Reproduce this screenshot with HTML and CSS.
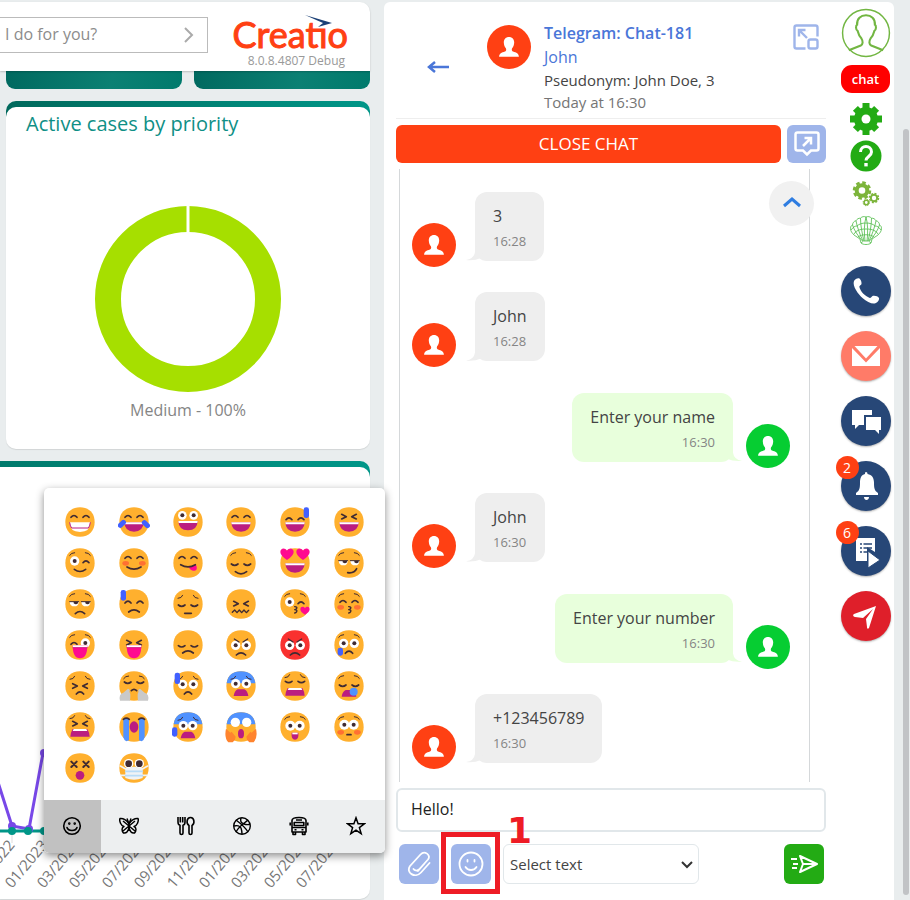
FILE: index.html
```html
<!DOCTYPE html>
<html lang="en">
<head>
    <meta charset="UTF-8">
    <meta name="viewport" content="width=device-width, initial-scale=1.0">
    <title>Creatio - Telegram: Chat-181</title>
    <link rel="stylesheet" href="styles.css">
</head>
<body>
    <!-- Shared shapes -->
    <svg class="sprite" aria-hidden="true">
        <symbol id="person" viewBox="0 0 44 44">
            <path fill="#fff" d="M22 12c-3.200 0-5.300 2.200-5.200 5.600.1 2.600.9 4.500 2.200 5.900.4 1.400.2 2.500-1 3-3.500 1.200-5.800 2-5.900 5.300h19.800c-.1-3.300-2.400-4.100-5.900-5.300-1.200-.5-1.400-1.600-1-3 1.300-1.400 2.100-3.300 2.200-5.900.1-3.400-2-5.600-5.200-5.600z"/>
        </symbol>
    </svg>

    <div class="app">
        <main class="dashboard">
            <header class="topbar">
                <div class="command">
                    <input type="text" class="command-input" placeholder="I do for you?" aria-label="What can I do for you?">
                    <button class="command-go" aria-label="Run command">
                        <svg width="12" height="18" viewBox="0 0 12 18" fill="none" stroke="#aaa" stroke-width="2"><path d="M2 2l7 7-7 7"/></svg>
                    </button>
                </div>
                <div class="brand">
                    <div class="brand-name">Creatio
                        <svg class="brand-swoosh" width="28" height="13" viewBox="0 0 28 13"><path fill="#fff" d="M12 5h10v8h-10z"/><path fill="#1b4077" d="M0 0l27 8-14 4 5-4z"/></svg>
                    </div>
                    <div class="brand-version">8.0.8.4807 Debug</div>
                </div>
            </header>

            <div class="tiles">
                <div class="tile"></div>
                <div class="tile"></div>
            </div>

            <section class="card">
                <div class="card-body">
                    <h2 class="card-title">Active cases by priority</h2>
                    <svg class="donut" width="190" height="190" viewBox="0 0 190 190">
                        <circle cx="95" cy="95" r="80" fill="none" stroke="#a6df00" stroke-width="26"/>
                        <path d="M95 0v30" stroke="#fff" stroke-width="3"/>
                    </svg>
                    <div class="donut-label">Medium - 100%</div>
                </div>
            </section>

            <section class="card card-wide">
                <div class="card-body">
                    <svg class="line-chart" width="370" height="160" viewBox="0 0 370 160">
                        <path d="M12 92v12M44 92v12" stroke="#ddd"/>
                        <path d="M-4 37L12 87l17 3L43 14" fill="none" stroke="#7848e8" stroke-width="3"/>
                        <path d="M0 92h60" stroke="#009688" stroke-width="3"/>
                        <g fill="#7848e8"><circle cx="12" cy="87" r="4"/><circle cx="29" cy="90" r="4"/><circle cx="44" cy="14" r="4"/></g>
                        <g fill="#009688"><circle cx="12" cy="92" r="4"/><circle cx="28" cy="92" r="4"/><circle cx="44" cy="92" r="4"/></g>
                        <g class="axis-labels">
                            <text transform="translate(-21 150) rotate(-50)">11/2022</text>
                            <text transform="translate(12 150) rotate(-50)">01/2023</text>
                            <text transform="translate(44 150) rotate(-50)">03/2023</text>
                            <text transform="translate(76 150) rotate(-50)">05/2023</text>
                            <text transform="translate(109 150) rotate(-50)">07/2023</text>
                            <text transform="translate(141 150) rotate(-50)">09/2023</text>
                            <text transform="translate(174 150) rotate(-50)">11/2023</text>
                            <text transform="translate(206 150) rotate(-50)">01/2024</text>
                            <text transform="translate(238 150) rotate(-50)">03/2024</text>
                            <text transform="translate(271 150) rotate(-50)">05/2024</text>
                            <text transform="translate(303 150) rotate(-50)">07/2024</text>
                        </g>
                    </svg>
                </div>
            </section>

            <div class="emoji-picker">
                <div class="emoji-grid" id="emojiGrid"></div>
                <div class="emoji-tabs">
                    <button class="emoji-tab active" aria-label="Smileys">
                        <svg width="20" height="20" viewBox="0 0 20 20" fill="none" stroke="#000" stroke-width="1.600" stroke-linecap="round"><circle cx="10" cy="10" r="8.300"/><path d="M5 11.500c1.300 4 8.700 4 10 0"/><circle cx="7.300" cy="7.600" r=".5" fill="#000"/><circle cx="12.700" cy="7.600" r=".5" fill="#000"/></svg>
                    </button>
                    <button class="emoji-tab" aria-label="Nature">
                        <svg width="20" height="20" viewBox="0 0 20 20" fill="none" stroke="#000" stroke-width="1.500" stroke-linejoin="round"><path d="M10 8C8 4 4 2 1 2.500 0 5 2 10 5 10.500c-2.500 1-2.500 4-.5 6.500 3 .5 5-2 5.500-6 .5 4 2.500 6.500 5.500 6 2-2.500 2-5.500-.5-6.500 3-.5 5-5.500 4-8-3-.5-7 1.500-9 5.500z"/><path d="M4 5l12 10M16 5L4 15M10 6v8M8 2.500L10 8l2-5.500"/></svg>
                    </button>
                    <button class="emoji-tab" aria-label="Food">
                        <svg width="20" height="20" viewBox="0 0 20 20" fill="none" stroke="#000" stroke-width="1.600" stroke-linejoin="round"><path d="M2 1v5c0 2 1 3 2 3.300V17c0 2 3 2 3 0V9.300c1-.3 2-1.300 2-3.300V1M4.300 1v5.500M6.700 1v5.500"/><path d="M14.500 1.500c-4 0-4.500 6.500-1.500 8V17c0 2 3 2 3 0V9.500c3-1.500 2.500-8-1.500-8z"/></svg>
                    </button>
                    <button class="emoji-tab" aria-label="Activities">
                        <svg width="20" height="20" viewBox="0 0 20 20" fill="none" stroke="#000" stroke-width="1.400"><circle cx="10" cy="10" r="8.300"/><path d="M4 4c4 3 9 7 12 12M16 4c-3 3-9 6-12 12M9 2c-1 3 0 5 3 6 2 .7 4 1 6 0M2 10c3-1 6 0 7 2 1 3 1 4 1 6"/></svg>
                    </button>
                    <button class="emoji-tab" aria-label="Travel">
                        <svg width="20" height="20" viewBox="0 0 20 20" fill="none" stroke="#000" stroke-width="1.600" stroke-linejoin="round"><path d="M3 16V4.500C3 2.500 5 1.500 10 1.500s7 1 7 3V16zM3 11.500h14M4 16v2.500h2.500V16M13.500 16v2.500H16V16M1.200 6.500v3M18.800 6.500v3"/><path d="M5.200 6.500h9.600v3H5.200zM7 4h6M5.500 13.700h2M12.500 13.700h2"/></svg>
                    </button>
                    <button class="emoji-tab" aria-label="Favorites">
                        <svg width="20" height="20" viewBox="0 0 20 20" fill="none" stroke="#000" stroke-width="1.500"><path d="M10 1.800l2.100 5.900 6.300.1-5 3.800 1.800 6.100-5.200-3.600-5.200 3.600 1.800-6.100-5-3.800 6.300-.1z"/></svg>
                    </button>
                </div>
            </div>
        </main>

        <aside class="side">
            <section class="chat">
                <header class="chat-header">
                    <button class="back" aria-label="Back">
                        <svg width="24" height="14" viewBox="0 0 24 14"><path d="M3 7h20M9 2L3 7l6 5" fill="none" stroke="#4a76d8" stroke-width="2.500"/></svg>
                    </button>
                    <svg class="avatar avatar-client"><use href="#person"/></svg>
                    <div class="contact">
                        <a href="#" class="contact-channel">Telegram: Chat-181</a>
                        <a href="#" class="contact-name">John</a>
                        <div class="contact-alias">Pseudonym: John Doe, 3</div>
                        <div class="contact-time">Today at 16:30</div>
                    </div>
                    <button class="expand" aria-label="Open in window">
                        <svg width="26" height="26" viewBox="0 0 26 26" fill="none" stroke="#9fb5ea" stroke-width="2.400"><path d="M12.500 24.500H3.500c-1.500 0-2-.5-2-2v-19c0-1.500.5-2 2-2h19c1.500 0 2 .5 2 2v9"/><rect x="15.500" y="15.500" width="9" height="9" rx="2"/><path d="M6 12.500V6h6.500M6 6l8 8"/></svg>
                    </button>
                </header>

                <div class="chat-actions">
                    <button class="btn-close">CLOSE CHAT</button>
                    <button class="btn-tool" aria-label="Transfer chat">
                        <svg width="26" height="26" viewBox="0 0 26 26" fill="none" stroke="#fff" stroke-width="2.500"><path d="M3.500 1.500h19c1.300 0 2 .7 2 2v14c0 1.300-.7 2-2 2H17l-4 4-4-4H3.500c-1.300 0-2-.7-2-2v-14c0-1.300.7-2 2-2z"/><path d="M9 15l7.500-7.500M10.500 7H17v6.500"/></svg>
                    </button>
                </div>

                <div class="messages">
                    <button class="scroll-up" aria-label="Scroll up">
                        <svg width="20" height="12" viewBox="0 0 20 12" fill="none" stroke="#2f7de1" stroke-width="3"><path d="M2 9l8-7 8 7"/></svg>
                    </button>
                    <div class="message">
                        <svg class="avatar avatar-client"><use href="#person"/></svg>
                        <div class="bubble"><p>3</p><time>16:28</time></div>
                    </div>
                    <div class="message">
                        <svg class="avatar avatar-client"><use href="#person"/></svg>
                        <div class="bubble"><p>John</p><time>16:28</time></div>
                    </div>
                    <div class="message message-out">
                        <svg class="avatar avatar-agent"><use href="#person"/></svg>
                        <div class="bubble"><p>Enter your name</p><time>16:30</time></div>
                    </div>
                    <div class="message">
                        <svg class="avatar avatar-client"><use href="#person"/></svg>
                        <div class="bubble"><p>John</p><time>16:30</time></div>
                    </div>
                    <div class="message message-out">
                        <svg class="avatar avatar-agent"><use href="#person"/></svg>
                        <div class="bubble"><p>Enter your number</p><time>16:30</time></div>
                    </div>
                    <div class="message">
                        <svg class="avatar avatar-client"><use href="#person"/></svg>
                        <div class="bubble"><p>+123456789</p><time>16:30</time></div>
                    </div>
                </div>

                <input type="text" class="message-input" value="Hello!" aria-label="Message">

                <div class="composer">
                    <button class="btn-tool" aria-label="Attach file">
                        <svg width="26" height="28" viewBox="0 0 26 28" fill="none" stroke="#fff" stroke-width="1.800" stroke-linecap="round" stroke-linejoin="round"><path d="M23.500 13l-8.500 9.500C9 29-.500 22.500 4 16L14.500 4.500c4-4.500 11 .5 7.500 5L13 19.500c-2 2-4.500.8-5.500-.5M18.500 13.500L12 21"/></svg>
                    </button>
                    <div class="emoji-toggle">
                        <button class="btn-tool" aria-label="Insert emoji">
                            <svg width="26" height="26" viewBox="0 0 26 26" fill="none" stroke="#fff" stroke-width="1.800" stroke-linecap="round"><circle cx="13" cy="13" r="11.500"/><path d="M7.500 16c2.500 4 8.500 4 11 0M9.500 9v1.500M16.500 9v1.500"/></svg>
                        </button>
                        <span class="callout">1</span>
                    </div>
                    <div class="select-wrap">
                        <select class="template-select" aria-label="Text template">
                            <option>Select text</option>
                        </select>
                        <svg class="select-arrow" width="12" height="8" viewBox="0 0 12 8" fill="none" stroke="#333" stroke-width="2"><path d="M1 1l5 5 5-5"/></svg>
                    </div>
                    <button class="btn-send" aria-label="Send">
                        <svg width="28" height="20" viewBox="0 0 28 20" fill="none" stroke="#fff" stroke-width="2" stroke-linejoin="round"><path d="M10 2l17 8-17 8 3-8zM13 10h13M1 5h6M3 10h5M2 14h5"/></svg>
                    </button>
                </div>
            </section>

            <nav class="rail">
                <button class="rail-btn rail-user" aria-label="Profile">
                    <svg width="50" height="50" viewBox="0 0 48 48" fill="none" stroke="#72b642" stroke-width="1.400"><circle cx="24" cy="24" r="22.500"/><path stroke-width="2" d="M7.500 40.500L19 36c2-1 2.500-4 .5-7-2-2-3-5-3.500-7-2-1-2-5-.5-6C15 10 19 7 24 7s9 3 8.500 9c1.500 1 1.500 5-.5 6-.5 2-1.500 5-3.500 7-2 3-1.500 6 .5 7l11.500 4.500"/></svg>
                </button>
                <button class="rail-chat">chat</button>
                <button class="rail-btn rail-gear" aria-label="Settings">
                    <svg width="32" height="32" viewBox="0 0 32 32"><g fill="#23ab14"><circle cx="16" cy="16" r="12"/><path d="M12.500 0h7v32h-7z"/><path d="M0 12.500h32v7H0z"/><path d="M12.500 1h7v30h-7z" transform="rotate(45 16 16)"/><path d="M12.500 1h7v30h-7z" transform="rotate(-45 16 16)"/></g><circle cx="16" cy="16" r="4.500" fill="#fff"/></svg>
                </button>
                <button class="rail-btn rail-help" aria-label="Help">
                    <svg width="32" height="32" viewBox="0 0 32 32"><circle cx="16" cy="16" r="15.500" fill="#23ab14"/><path d="M10.500 12c0-7.500 11-7.500 11 0 0 4.500-5.500 4.500-5.500 8.500" fill="none" stroke="#fff" stroke-width="3"/><path fill="#fff" d="M14.300 23h3.400v3.400h-3.400z"/></svg>
                </button>
                <button class="rail-btn rail-gears" aria-label="System designer">
                    <svg width="28" height="26" viewBox="0 0 28 26" fill="none" stroke="#7cb43a"><circle cx="10" cy="9.500" r="5.300" stroke-width="4"/><circle cx="10" cy="9.500" r="8" stroke-width="2.500" stroke-dasharray="3.600 2.680"/><circle cx="22" cy="17" r="3.200" stroke-width="2"/><circle cx="22" cy="17" r="4.600" stroke-width="1.300" stroke-dasharray="2 1.610"/><circle cx="14.300" cy="21.500" r="2.200" stroke-width="1.600"/><circle cx="14.300" cy="21.500" r="3.200" stroke-width="1" stroke-dasharray="1.300 1.210"/></svg>
                </button>
                <button class="rail-btn rail-shell" aria-label="Shell">
                    <svg width="32" height="30" viewBox="0 0 32 30" fill="none" stroke="#4cba45" stroke-width=".8"><path d="M11 27l-1-4-6-4c-2-2-3.500-4-3.500-6.500 0-2 .8-3 2-3.500 0-2 1.500-4 3.500-4.200C7 3 8.500 2 10.500 2.200 12 .5 14 .2 16 1c2-.8 4-.5 5.500 1.200 2-.2 3.500.8 4.500 2.600 2 .2 3.500 2.200 3.500 4.200 1.200.5 2 1.500 2 3.500 0 2.500-1.500 4.500-3.500 6.500l-6 4-1 4c-2 2-8 2-10 0zM11 27l2.500-2h5l2.500 2"/><path d="M12.500 25C8 20 4 14 2.500 9M13 25C9.500 18 7 10 6 4.800M14 25c-2-8-3.500-16-3.500-22.800M15 25c-1-8-1-17 1-24M17 25c1-8 1-17-1-24M18 25c2-8 3.500-16 3.500-22.800M19 25c3.500-7 6-15 7-20.200M19.500 25c4.500-5 8.500-11 10-16"/><path d="M1 14c2-3 4-4 6-4 2-2 5-3 9-3s7 1 9 3c2 0 4 1 6 4M4 18c2-3 5-5 12-5s10 2 12 5M8 21c3-3 13-3 16 0"/></svg>
                </button>
                <div class="rail-list">
                    <button class="round round-navy" aria-label="Calls">
                        <svg width="50" height="50" viewBox="0 0 50 50"><path fill="#fff" d="M13 15c1-2 4-3.500 5.500-2.500 1.500 1.500 2.200 3.500 2 5.500-.3 1-2 1.500-2.200 2.800 1.200 5 5.500 9.200 10.500 11.200 1.500 0 2-2 3.200-2.200 2.500-.3 5 .5 6 2.200.5 2.500-2 5-4.500 5.500-3 .5-8-2-12-5.500S11 20 13 15z"/></svg>
                    </button>
                    <button class="round round-coral" aria-label="Email">
                        <svg width="50" height="50" viewBox="0 0 50 50"><path fill="#fff" d="M11 17l14 14.500L39 17v18H11z"/><path fill="#fff" d="M13.500 15h23L25 27.500z"/></svg>
                    </button>
                    <button class="round round-navy" aria-label="Chats">
                        <svg width="50" height="50" viewBox="0 0 50 50"><path fill="#fff" d="M11 14h20v5h-8v10h-5l-4 4v-4h-3z"/><path fill="#fff" d="M25 21h15v13h-2v4l-4-4h-9z"/></svg>
                    </button>
                    <button class="round round-navy" aria-label="Notifications">
                        <svg width="50" height="50" viewBox="0 0 50 50"><path fill="#fff" d="M25 11c1 0 1.500.8 1.500 2 4.500.8 6.500 4 6.500 8.500 0 6 .5 8 4 10.500v2H15v-2c3.500-2.500 4-4.500 4-10.500 0-4.500 1.500-7.700 5-8.500 0-1.200 0-2 1-2zM23 36h5c0 4-5 4-5 0z"/></svg>
                        <span class="badge">2</span>
                    </button>
                    <button class="round round-navy" aria-label="Process tasks">
                        <svg width="50" height="50" viewBox="0 0 50 50"><path fill="#fff" d="M15 12h19v14l-8-5v14H15z"/><path d="M19 18h2M22.500 18H31M19 22h2M22.500 22H31M19 26h2M22.500 26H26" stroke="#274777" stroke-width="1.500"/><path fill="#fff" stroke="#274777" d="M27 25l12 9-12 8z"/></svg>
                        <span class="badge">6</span>
                    </button>
                    <button class="round round-red" aria-label="Telegram">
                        <svg width="50" height="50" viewBox="0 0 50 50"><path fill="#fff" d="M13 23l22-8-7 22c-1 1-2 1-2-1l-1-8 7-10-10 9-8-1c-2-.5-2.500-2-1-3z"/></svg>
                    </button>
                </div>
            </nav>
        </aside>

        <div class="scrollbar"><div class="scrollbar-thumb"></div></div>
    </div>

    <script src="emoji.js"></script>
</body>
</html>
```
FILE: emoji.js
```js
// Emoji faces are put together from a few shared parts.
// All coordinates are relative to the centre of a 96x96 face.
const INK = '#402b32';
const PLUM = '#bb1d80';
const PINK = '#ff0a90';
const BLUE = '#4160ff';
const SKY = '#5092ff';

const line = (d, w = 5, color = INK) =>
    `<path d="${d}" fill="none" stroke="${color}" stroke-width="${w}" stroke-linecap="round" stroke-linejoin="round"/>`;
const fill = (d, color) => `<path d="${d}" fill="${color}"/>`;
const dot = (x, y, r, color) => `<circle cx="${x}" cy="${y}" r="${r}" fill="${color}"/>`;
const oval = (x, y, rx, ry, color) => `<ellipse cx="${x}" cy="${y}" rx="${rx}" ry="${ry}" fill="${color}"/>`;

// Eyes
const arcEye = (x, y) => line(`M${x - 9} ${y + 4}q9 -11 18 0`);
const happy = (y = -18) => arcEye(-18, y) + arcEye(18, y);
const closed = (y = 3) => line(`M-29 ${y}q10 8 20 0M9 ${y}q10 8 20 0`);
const squint = (y = -16) => line(`M-22 ${y - 7}l14 7l-14 7M22 ${y - 7}l-14 7l14 7`);
const openEye = (x, y, r = 14) => dot(x, y, r, '#fff') + dot(x, y, 6, INK);
const openEyes = (y, dx = 16, r = 14) => openEye(-dx, y, r) + openEye(dx, y, r);
const lidded = fill('M-31 -7h27q0 14 -13 14t-14 -14zM4 -7h27q0 14 -13 14t-14 -14z', '#fff')
    + fill('M-19 -7h13v5q-6 6 -13 0zM16 -7h13v5q-6 6 -13 0z', INK) + line('M-31 -7h27M4 -7h27', 3);

// Brows
const brows = (y = -28) => line(`M-31 ${y + 5}q5 -8 15 -8M31 ${y + 5}q-5 -8 -15 -8`, 3);
const sadBrows = (y = -20) => line(`M-30 ${y}q11 0 14 -9M30 ${y}q-11 0 -14 -9`, 3);
const angryBrows = line('M-20 -18l14 9M20 -18l-14 9', 4);

// Mouths
const laugh = (y = 1) => fill(`M-29 ${y}h58q-1 28 -29 28t-29 -28z`, PLUM) + fill(`M-29 ${y}h58l-1 6h-56z`, '#fff');
const smile = (w = 17, y = 19) => line(`M${-w} ${y}q${w} 13 ${w * 2} 0`);
const frown = (w = 14, y = 27) => line(`M${-w} ${y}q${w} -13 ${w * 2} 0`);
const tongueOut = fill('M-22 1h44q0 39 -22 39t-22 -39z', PINK) + fill('M-22 1h44l-1 6h-42z', '#fff')
    + line('M-21 8h42', 2, PLUM);
const kiss = line('M-1 8q9 1 6 5q-2 4 -6 4q9 0 6 6q-2 4 -6 4', 4);
const wail = (y = 6) => fill(`M-22 ${y}h44q7 12 7 23h-58q0 -11 7 -23z`, PLUM) + fill(`M-19 ${y}h38l3 6h-44z`, '#fff');
const gasp = (y = 10) => fill(`M-10 ${y}h20q10 5 12 20h-44q2 -15 12 -20z`, PLUM);

// Extras
const blush = (y = 1) => oval(-25, y, 10, 7, '#ff7032') + oval(25, y, 10, 7, '#ff7032');
const drop = (x, y, h = 32) => `<rect x="${x - 8}" y="${y - h / 2}" width="16" height="${h}" rx="7" fill="${BLUE}"/>`;
const heart = (x, y, s = 1) => `<path transform="translate(${x} ${y}) scale(${s})" d="M0 18Q-20 5 -20 -6C-20 -18 -6 -20 0 -10C6 -20 20 -18 20 -6Q20 5 0 18z" fill="${PINK}"/>`;
const blueTop = fill('M-43 -8C-40 -32 -25 -44 0 -44S40 -32 43 -8z', SKY);
const cheekTears = `<rect x="-8" y="-14" width="15" height="28" rx="7" fill="${BLUE}" transform="translate(-36 6) rotate(45)"/>`
    + `<rect x="-8" y="-14" width="15" height="28" rx="7" fill="${BLUE}" transform="translate(36 6) rotate(-45)"/>`;

const faces = [
    happy() + fill('M-31 1h62q0 29 -31 29t-31 -29z', '#fff') + line('M-31 2q2 12 6 16h50q4 -4 6 -16', 3, PLUM),
    happy() + laugh() + cheekTears,
    openEyes(-20, 17, 13) + laugh(-3),
    happy() + laugh(),
    happy(-11) + laugh() + drop(34, -28),
    squint() + laugh(),

    brows() + openEye(-16, -6) + arcEye(18, -5) + smile(),
    happy() + blush() + smile(21, 12),
    happy() + fill('M2 12l22 -7q7 16 -5 18q-10 2 -17 -11z', PINK) + smile(22, 5),
    brows() + closed() + smile(17, 26),
    heart(-24, -27) + heart(24, -27) + laugh(),
    brows() + lidded + line('M-4 29q20 3 27 -12'),

    brows() + lidded + frown(14, 29),
    drop(-32, -26) + happy(-7) + frown(16, 24),
    sadBrows(-17) + closed() + line('M-10 28h20'),
    squint(-1) + line('M-26 25l7 -7l7 8l7 -8l7 8l7 -8l7 8l7 -7', 4),
    brows() + openEye(-16, -6) + arcEye(18, -5) + kiss + heart(30, 20, 0.7),
    brows() + happy(-9) + blush(10) + kiss,

    brows() + openEye(16, -6) + arcEye(-18, -6) + tongueOut,
    squint(-7) + tongueOut,
    closed(2) + frown(16, 24),
    openEyes(1) + angryBrows + frown(14, 30),
    openEyes(1) + angryBrows + frown(14, 30),
    brows() + openEyes(-5) + frown(11, 25) + drop(-26, 20, 24),

    sadBrows() + squint(0) + frown(11, 24),
    brows(-27) + closed(-12) + line('M-8 14q8 -8 16 0')
        + fill('M-18 8q8 2 4 10q5 2 2 26h-30q-5 -20 10 -24zM18 8q-8 2 -4 10q-5 2 -2 26h30q5 -20 -10 -24z', '#c9c9c9'),
    sadBrows() + openEyes(-5) + frown(11, 24) + drop(-32, -23, 34),
    blueTop + sadBrows() + openEyes(-7) + gasp(),
    sadBrows(-25) + closed(-14) + wail(),
    brows() + closed(-3) + gasp(12) + dot(14, 17, 12, SKY),

    sadBrows(-25) + squint(-10) + wail(),
    fill('M-32 -24h17V40l-8 3q-7 -3 -9 -12zM32 -24H15V40l8 3q7 -3 9 -12z', SKY)
        + line('M-32 -23q9 -7 18 0M14 -23q9 -7 18 0') + oval(0, 0, 13, 17, PLUM),
    blueTop + sadBrows() + openEyes(-4, 14) + gasp(14) + drop(-40, 15, 28),
    blueTop + dot(-17, -14, 14, '#fff') + dot(17, -14, 14, '#fff') + oval(0, 20, 9, 14, PLUM)
        + fill('M-45 5l13 12l4 -3l12 15q0 10 -9 17h-13q-13 -14 -7 -41zM45 5l-13 12l-4 -3l-12 15q0 10 9 17h13q13 -14 7 -41z', '#ff842e'),
    brows() + openEyes(-4, 14, 15) + fill('M-10 17h20q2 21 -10 21t-10 -21z', PLUM) + fill('M-8 17h16v5h-16z', '#fff'),
    brows() + openEyes(-7, 14, 15) + blush(16) + line('M-6 23h12'),

    line('M-26 -19l16 16M-10 -19l-16 16M10 -19l16 16M26 -19l-16 16', 6) + dot(0, 22, 13, PLUM),
    dot(-16, -13, 14, '#fff') + dot(16, -13, 14, '#fff') + dot(-16, -13, 10, INK) + dot(16, -13, 10, INK)
        + line('M-41 -6l16 9M41 -6l-16 9M-39 22h15M39 22h-15', 5, '#f0f3f6')
        + fill('M-26 0L0 -4L26 0V30Q0 40 -26 30z', '#f0f3f6') + line('M-25 10h50M-25 23h50', 5, '#b8dcf7'),
];

const ANGRY = 22;

document.getElementById('emojiGrid').innerHTML = faces.map((parts, i) => `
    <button class="emoji" aria-label="Emoji ${i + 1}">
        <svg width="32" height="32" viewBox="-48 -48 96 96">
            <path d="M-44 0C-44 -27 -27 -44 0 -44S44 -27 44 0S27 44 0 44S-44 27 -44 0z" fill="${i === ANGRY ? '#f9312f' : '#ffb02e'}"/>
            ${parts}
        </svg>
    </button>`).join('');
```
FILE: styles.css
```css
* {
    box-sizing: border-box;
}
body {
    font-family: "Open Sans", "Noto Sans", sans-serif;
    font-size: 16px;
    margin: 0;
    background-color: #e9edee;
    color: #444;
}
button {
    border: none;
    padding: 0;
    background: none;
    font-family: inherit;
    cursor: pointer;
    display: flex;
    align-items: center;
    justify-content: center;
}
svg {
    display: block;
}
h2, p {
    margin: 0;
}
.sprite {
    position: absolute;
    width: 0;
    height: 0;
}
.app {
    display: flex;
    height: 100vh;
    padding-top: 2px;
    overflow: hidden;
}

/* Dashboard */
.dashboard {
    position: relative;
    flex: 1;
    min-width: 0;
    display: flex;
    flex-direction: column;
    padding: 0 14px 1px 0;
}
.topbar {
    display: flex;
    justify-content: space-between;
    height: 69px;
    padding-right: 22px;
    background: white;
    border-top-right-radius: 10px;
    box-shadow: 0 1px 2px rgba(0,0,0,0.2);
    z-index: 1;
}
.command {
    display: flex;
    width: 208px;
    height: 36px;
    margin-top: 15px;
    border: 1px solid #bbb;
    border-left: none;
}
.command-input {
    flex: 1;
    min-width: 0;
    border: none;
    padding: 0 5px 2px;
    font-family: inherit;
    font-size: 16px;
    background: none;
}
.command-input::placeholder {
    color: #8c8c8c;
}
.command-go {
    width: 36px;
}
.brand {
    text-align: right;
    padding-top: 12px;
}
.brand-name {
    position: relative;
    font-family: Lato, sans-serif;
    font-size: 36px;
    line-height: 40px;
    color: #ff4013;
    -webkit-text-stroke: 1px #ff4013;
}
.brand-swoosh {
    position: absolute;
    right: 15px;
    top: 1px;
}
.brand-version {
    font-size: 12px;
    line-height: 14px;
    color: #999;
    padding-right: 3px;
}
.tiles {
    display: flex;
    gap: 12px;
    padding-left: 6px;
    margin-bottom: 12px;
}
.tile {
    flex: 1;
    height: 18px;
    background: linear-gradient(100deg, #00695f, #0b8073 60%, #007a6c);
    border-radius: 0 0 9px 9px;
}
.card {
    margin: 0 0 12px 6px;
    padding-top: 6px;
    background: linear-gradient(90deg, #00695c, #009688) top / 100% 18px no-repeat;
    border-radius: 10px;
}
.card-body {
    height: 100%;
    padding-bottom: 27px;
    background: white;
    border-radius: 10px;
    box-shadow: 0 1px 1px rgba(0,0,0,0.1);
}
.card-title {
    padding: 2px 20px 0;
    font-size: 20px;
    line-height: 30px;
    font-weight: 400;
    color: #0f8f86;
}
.donut {
    margin: 65px auto 0;
}
.donut-label {
    margin-top: 4px;
    font-size: 16px;
    line-height: 24px;
    font-weight: 500;
    text-align: center;
    color: #858585;
}
.card-wide {
    flex: 1;
    margin: 0;
    border-radius: 0 10px 10px 0;
    background-image: linear-gradient(90deg, #007a6c, #009688);
}
.card-wide .card-body {
    display: flex;
    align-items: flex-end;
    padding: 0;
    border-radius: 0 10px 10px 0;
    overflow: hidden;
}
.axis-labels {
    font-size: 15px;
    fill: #777;
}

/* Emoji picker */
.emoji-picker {
    position: absolute;
    right: -1px;
    bottom: 47px;
    width: 341px;
    background: white;
    border-radius: 5px;
    box-shadow: 0 3px 8px rgba(0,0,0,0.45);
    overflow: hidden;
    z-index: 2;
}
.emoji-grid {
    display: grid;
    grid-template-columns: repeat(6, 1fr);
    grid-auto-rows: 41px;
    padding: 13px 9px 12px;
}
.emoji-tabs {
    display: flex;
    height: 53px;
    background: #edeff0;
}
.emoji-tab {
    flex: 1;
    padding: 0 1px 2px 0;
}
.emoji-tab.active {
    background: #c1c1c1;
}

/* Side panel */
.side {
    display: flex;
    width: 510px;
    background: white;
    border-radius: 6px 6px 0 0;
}
.chat {
    flex: 1;
    min-width: 0;
    display: flex;
    flex-direction: column;
    padding-left: 12px;
}
.chat-header {
    display: flex;
    align-items: flex-start;
    height: 117px;
    padding: 19px 7px 0 30px;
    border-bottom: 1px solid #eee;
}
.back {
    margin-top: 39px;
}
.avatar {
    flex: none;
    width: 44px;
    height: 44px;
    border-radius: 50%;
}
.avatar-client {
    background: #ff4013;
}
.avatar-agent {
    background: #06cd32;
}
.chat-header .avatar {
    margin: 4px 13px 0 37px;
}
.contact {
    flex: 1;
    font-size: 15px;
    line-height: 22px;
}
.contact a {
    display: block;
    font-size: 16px;
    line-height: 24px;
    color: #4a76d8;
    text-decoration: none;
}
.contact .contact-channel {
    font-weight: 600;
}
.contact-time {
    color: #757575;
}
.expand {
    margin-top: 3px;
}
.chat-actions {
    display: flex;
    gap: 6px;
    margin: 6px 0;
}
.btn-close {
    flex: 1;
    height: 38px;
    padding-bottom: 2px;
    border-radius: 6px;
    background: #ff4013;
    color: white;
    font-size: 17px;
}
.btn-tool {
    width: 40px;
    height: 40px;
    border-radius: 6px;
    background: #9fb5ea;
}
.chat-actions .btn-tool {
    width: 39px;
    height: 38px;
}
.messages {
    position: relative;
    flex: 1;
    display: flex;
    flex-direction: column;
    justify-content: space-between;
    margin: 0 16px 6px 3px;
    padding: 23px 19px 13px 12px;
    border: solid #d5d8da;
    border-width: 0 1px;
}
.scroll-up {
    position: absolute;
    top: 12px;
    right: -5px;
    width: 45px;
    height: 45px;
    padding-bottom: 2px;
    border-radius: 50%;
    background: #f1f1f1;
}
.message {
    display: flex;
    align-items: flex-end;
    gap: 19px;
}
.message-out {
    flex-direction: row-reverse;
    gap: 13px;
}
.bubble {
    position: relative;
    margin-bottom: 6px;
    padding: 12px 18px;
    background: #eee;
    border-radius: 12px;
}
.bubble::before {
    content: "";
    position: absolute;
    left: -9px;
    bottom: 0;
    width: 18px;
    height: 16px;
    background: inherit;
    clip-path: path("M9 0v7q-1 7 -9 8q8 1 15 -2l3 -3z");
}
.message-out .bubble {
    background: #e8ffdc;
    text-align: right;
}
.message-out .bubble::before {
    left: auto;
    right: -9px;
    transform: scaleX(-1);
}
.bubble p {
    line-height: 24px;
}
.bubble time {
    display: block;
    margin-top: 5px;
    font-size: 13px;
    line-height: 16px;
    color: #858585;
}
.message-input {
    width: 100%;
    height: 44px;
    padding: 0 13px 2px;
    border: 2px solid #e1e7ea;
    border-radius: 6px;
    font-family: inherit;
    font-size: 16px;
    color: #222;
}
.composer {
    display: flex;
    gap: 12px;
    padding: 12px 2px 16px 3px;
}
.emoji-toggle {
    position: relative;
}
.emoji-toggle::after {
    content: "";
    position: absolute;
    inset: -12px -9px -10px -10px;
    border: 5px solid #ee1c25;
    pointer-events: none;
}
.callout {
    position: absolute;
    left: 56px;
    top: -31px;
    font-family: "DejaVu Sans", sans-serif;
    font-size: 36px;
    line-height: 36px;
    font-weight: bold;
    color: #ee1c25;
}
.select-wrap {
    position: relative;
    width: 196px;
}
.template-select {
    appearance: none;
    width: 100%;
    height: 40px;
    padding: 0 6px;
    border: 1px solid #e1e7ea;
    border-radius: 6px;
    background: white;
    font-family: inherit;
    font-size: 15px;
    color: #444;
}
.select-arrow {
    position: absolute;
    right: 6px;
    top: 17px;
}
.btn-send {
    width: 40px;
    height: 40px;
    margin-left: auto;
    border-radius: 6px;
    background: #23ab14;
}

/* Right rail */
.rail {
    display: flex;
    flex-direction: column;
    align-items: center;
    width: 68px;
    padding: 6px 0 0 11px;
}
.rail-chat {
    width: 49px;
    height: 28px;
    margin: 7px 0 10px;
    border-radius: 11px;
    background: #ff0000;
    color: white;
    font-size: 13px;
    font-weight: 600;
}
.rail-help {
    margin: 5px 0 9px;
}
.rail-shell {
    margin: 9px 0 20px;
}
.rail-list {
    display: flex;
    flex-direction: column;
    gap: 15px;
}
.round {
    position: relative;
    width: 50px;
    height: 50px;
    border-radius: 50%;
    box-shadow: 0 1px 2px rgba(0,0,0,0.3);
}
.round-navy {
    background: #274777;
}
.round-coral {
    background: #ff7b68;
}
.round-red {
    background: #df1f2a;
}
.badge {
    position: absolute;
    left: -5px;
    top: -5px;
    width: 23px;
    height: 23px;
    border-radius: 50%;
    background: #ff4013;
    color: white;
    font-size: 14px;
    line-height: 23px;
    text-align: center;
}

/* Page scrollbar */
.scrollbar {
    display: flex;
    justify-content: flex-end;
    width: 16px;
    padding: 127px 1px 5px 0;
}
.scrollbar-thumb {
    width: 6px;
    border-radius: 3px;
    background: #c1c3c6;
}
```
